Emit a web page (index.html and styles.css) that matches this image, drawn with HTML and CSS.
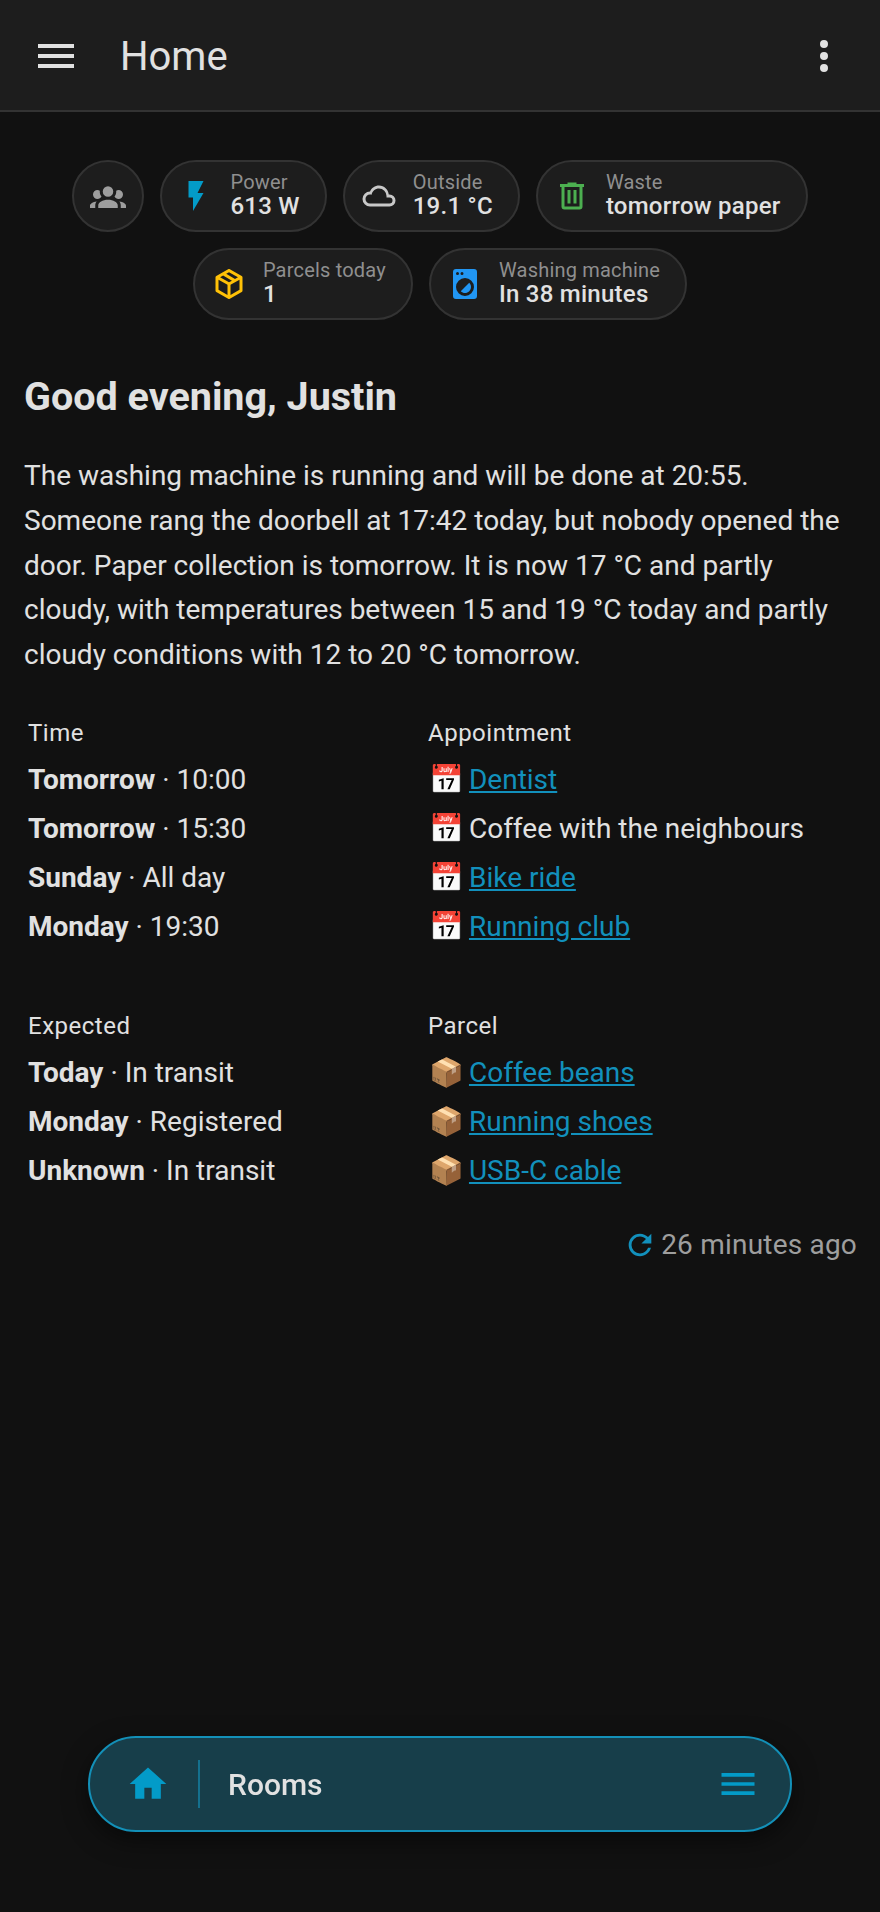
FILE: index.html
```html
<!DOCTYPE html>
<html lang="en">
<head>
    <meta charset="UTF-8">
    <meta name="viewport" content="width=device-width, initial-scale=1.0">
    <title>Home</title>
    <link rel="stylesheet" href="styles.css">
</head>
<body>

    <header class="topbar">
        <svg class="topbar-icon" viewBox="0 0 24 24"><path d="M3,6H21V8H3V6M3,11H21V13H3V11M3,16H21V18H3V16Z"/></svg>
        <div class="topbar-title">Home</div>
        <svg class="topbar-icon" viewBox="0 0 24 24"><path d="M12,16A2,2 0 0,1 14,18A2,2 0 0,1 12,20A2,2 0 0,1 10,18A2,2 0 0,1 12,16M12,10A2,2 0 0,1 14,12A2,2 0 0,1 12,14A2,2 0 0,1 10,12A2,2 0 0,1 12,10M12,4A2,2 0 0,1 14,6A2,2 0 0,1 12,8A2,2 0 0,1 10,6A2,2 0 0,1 12,4Z"/></svg>
    </header>

    <main class="content">
        <div class="chips">
            <div class="chip chip-round">
                <svg class="chip-icon icon-grey" viewBox="0 0 24 24"><path d="M12,5.5A3.5,3.5 0 0,1 15.5,9A3.5,3.5 0 0,1 12,12.5A3.5,3.5 0 0,1 8.5,9A3.5,3.5 0 0,1 12,5.5M5,8C5.56,8 6.08,8.15 6.53,8.42C6.38,9.85 6.8,11.27 7.66,12.38C7.16,13.34 6.16,14 5,14A3,3 0 0,1 2,11A3,3 0 0,1 5,8M19,8A3,3 0 0,1 22,11A3,3 0 0,1 19,14C17.84,14 16.84,13.34 16.34,12.38C17.2,11.27 17.62,9.85 17.47,8.42C17.92,8.15 18.44,8 19,8M5.5,18.25C5.5,16.18 8.41,14.5 12,14.5C15.59,14.5 18.5,16.18 18.5,18.25V20H5.5V18.25M0,20V18.5C0,17.11 1.89,15.94 4.45,15.6C3.86,16.28 3.5,17.22 3.5,18.25V20H0M24,20H20.5V18.25C20.5,17.22 20.14,16.28 19.55,15.6C22.11,15.94 24,17.11 24,18.5V20Z"/></svg>
            </div>
            <div class="chip">
                <svg class="chip-icon icon-blue" viewBox="0 0 24 24"><path d="M7,2V13H10V22L17,10H13L17,2H7Z"/></svg>
                <div class="chip-text"><span class="chip-label">Power</span><span class="chip-value">613 W</span></div>
            </div>
            <div class="chip">
                <svg class="chip-icon icon-light" viewBox="0 0 24 24"><path d="M6,19A5,5 0 0,1 1,14A5,5 0 0,1 6,9C7,6.65 9.3,5 12,5C15.43,5 18.24,7.66 18.5,11.03L19,11A4,4 0 0,1 23,15A4,4 0 0,1 19,19H6M19,13H17V12A5,5 0 0,0 12,7C9.5,7 7.45,8.82 7.06,11.19C6.73,11.07 6.37,11 6,11A3,3 0 0,0 3,14A3,3 0 0,0 6,17H19A2,2 0 0,0 21,15A2,2 0 0,0 19,13Z"/></svg>
                <div class="chip-text"><span class="chip-label">Outside</span><span class="chip-value">19.1 °C</span></div>
            </div>
            <div class="chip">
                <svg class="chip-icon icon-green" viewBox="0 0 24 24"><path d="M9,3V4H4V6H5V19A2,2 0 0,0 7,21H17A2,2 0 0,0 19,19V6H20V4H15V3H9M7,6H17V19H7V6M9,8V17H11V8H9M13,8V17H15V8H13Z"/></svg>
                <div class="chip-text"><span class="chip-label">Waste</span><span class="chip-value">tomorrow paper</span></div>
            </div>
            <div class="chip">
                <svg class="chip-icon icon-amber" viewBox="0 0 24 24"><path d="M21,16.5C21,16.88 20.79,17.21 20.47,17.38L12.57,21.82C12.41,21.94 12.21,22 12,22C11.79,22 11.59,21.94 11.43,21.82L3.53,17.38C3.21,17.21 3,16.88 3,16.5V7.5C3,7.12 3.21,6.79 3.53,6.62L11.43,2.18C11.59,2.06 11.79,2 12,2C12.21,2 12.41,2.06 12.57,2.18L20.47,6.62C20.79,6.79 21,7.12 21,7.5V16.5M12,4.15L10.11,5.22L16,8.61L17.96,7.5L12,4.15M6.04,7.5L12,10.85L13.96,9.75L8.08,6.35L6.04,7.5M5,15.91L11,19.29V12.58L5,9.21V15.91M19,15.91V9.21L13,12.58V19.29L19,15.91Z"/></svg>
                <div class="chip-text"><span class="chip-label">Parcels today</span><span class="chip-value">1</span></div>
            </div>
            <div class="chip">
                <svg class="chip-icon icon-sky" viewBox="0 0 24 24"><path d="M14.83,11.17C16.39,12.73 16.39,15.27 14.83,16.83C13.27,18.39 10.73,18.39 9.17,16.83L14.83,11.17M6,2H18A2,2 0 0,1 20,4V20A2,2 0 0,1 18,22H6A2,2 0 0,1 4,20V4A2,2 0 0,1 6,2M7,4A1,1 0 0,0 6,5A1,1 0 0,0 7,6A1,1 0 0,0 8,5A1,1 0 0,0 7,4M10,4A1,1 0 0,0 9,5A1,1 0 0,0 10,6A1,1 0 0,0 11,5A1,1 0 0,0 10,4M12,8A6,6 0 0,0 6,14A6,6 0 0,0 12,20A6,6 0 0,0 18,14A6,6 0 0,0 12,8Z"/></svg>
                <div class="chip-text"><span class="chip-label">Washing machine</span><span class="chip-value">In 38 minutes</span></div>
            </div>
        </div>

        <h1 class="greeting">Good evening, Justin</h1>
        <p class="summary">The washing machine is running and will be done at 20:55. Someone rang the doorbell at 17:42 today, but nobody opened the door. Paper collection is tomorrow. It is now 17 °C and partly cloudy, with temperatures between 15 and 19 °C today and partly cloudy conditions with 12 to 20 °C tomorrow.</p>

        <table class="agenda">
            <tr><th>Time</th><th>Appointment</th></tr>
            <tr><td><b>Tomorrow</b> · 10:00</td><td><span class="emoji">📅</span> <a href="#">Dentist</a></td></tr>
            <tr><td><b>Tomorrow</b> · 15:30</td><td><span class="emoji">📅</span> Coffee with the neighbours</td></tr>
            <tr><td><b>Sunday</b> · All day</td><td><span class="emoji">📅</span> <a href="#">Bike ride</a></td></tr>
            <tr><td><b>Monday</b> · 19:30</td><td><span class="emoji">📅</span> <a href="#">Running club</a></td></tr>
        </table>

        <table class="agenda agenda-parcels">
            <tr><th>Expected</th><th>Parcel</th></tr>
            <tr><td><b>Today</b> · In transit</td><td><span class="emoji">📦</span> <a href="#">Coffee beans</a></td></tr>
            <tr><td><b>Monday</b> · Registered</td><td><span class="emoji">📦</span> <a href="#">Running shoes</a></td></tr>
            <tr><td><b>Unknown</b> · In transit</td><td><span class="emoji">📦</span> <a href="#">USB-C cable</a></td></tr>
        </table>

        <div class="updated">
            <svg class="updated-icon" viewBox="0 0 24 24"><path d="M17.65,6.35C16.2,4.9 14.21,4 12,4A8,8 0 0,0 4,12A8,8 0 0,0 12,20C15.73,20 18.84,17.45 19.73,14H17.65C16.83,16.33 14.61,18 12,18A6,6 0 0,1 6,12A6,6 0 0,1 12,6C13.66,6 15.14,6.69 16.22,7.78L13,11H20V4L17.65,6.35Z"/></svg>
            <span>26 minutes ago</span>
        </div>
    </main>

    <nav class="bottom-nav">
        <svg class="nav-home" viewBox="0 0 24 24"><path d="M10,20V14H14V20H19V12H22L12,3L2,12H5V20H10Z"/></svg>
        <div class="nav-divider"></div>
        <div class="nav-title">Rooms</div>
        <svg class="nav-menu" viewBox="0 0 24 24"><path d="M3,6H21V8H3V6M3,11H21V13H3V11M3,16H21V18H3V16Z"/></svg>
    </nav>

</body>
</html>
```

FILE: styles.css
```css
html, body { height: 100%; }
body {
    margin: 0;
    overflow: hidden;
    background-color: #111111;
    color: #e1e1e1;
    font-family: Roboto, "Liberation Sans", sans-serif;
}

.topbar {
    display: flex;
    align-items: center;
    box-sizing: border-box;
    height: 112px;
    padding: 2px 32px 0;
    background-color: #1d1d1d;
    border-bottom: 2px solid #333333;
}
.topbar-icon { width: 48px; height: 48px; fill: #e1e1e1; }
.topbar-title {
    flex: 1;
    margin-left: 40px;
    font-size: 40px;
}

.content { padding: 48px 24px 0; }

.chips {
    display: flex;
    flex-wrap: wrap;
    justify-content: center;
    gap: 16px;
}
.chip {
    display: flex;
    align-items: center;
    box-sizing: border-box;
    height: 72px;
    padding: 0 25px 0 16px;
    gap: 16px;
    background-color: #1d1d1d;
    border: 2px solid #333333;
    border-radius: 36px;
}
.chip-round { width: 72px; padding: 0; justify-content: center; }
.chip-icon { width: 36px; height: 36px; flex: none; }
.icon-grey { fill: #9e9e9e; }
.icon-blue { fill: #039bc8; }
.icon-light { fill: #c8c8c8; }
.icon-green { fill: #4caf50; }
.icon-amber { fill: #ffc107; }
.icon-sky { fill: #2196f3; }
.chip-text { display: flex; flex-direction: column; padding-bottom: 4px; }
.chip-label { font-size: 20px; line-height: 24px; color: #8f8f8f; letter-spacing: 0.2px; }
.chip-value { font-size: 24px; line-height: 24px; font-weight: 500; color: #e1e1e1; letter-spacing: 0.25px; }

.greeting {
    margin: 53px 0 0;
    font-size: 39.5px;
    line-height: 48px;
    font-weight: 700;
}
.summary {
    margin: 33px 0 0;
    font-size: 28px;
    line-height: 44.8px;
}

.agenda {
    width: 100%;
    margin-top: 32px;
    border-collapse: separate;
    border-spacing: 4px;
    table-layout: fixed;
    font-size: 28px;
}
.agenda-parcels { margin-top: 50px; }
.agenda th, .agenda td { padding: 0; text-align: left; height: 45px; white-space: nowrap; }
.agenda th { height: 39px; font-size: 24px; font-weight: 400; letter-spacing: 0.5px; }
.agenda th:first-child, .agenda td:first-child { width: 396px; }
.agenda b { font-weight: 700; }
.agenda a { color: #1290bc; }
.emoji { margin: 0 -2px 0 1px; }

.updated {
    display: flex;
    align-items: center;
    justify-content: flex-end;
    gap: 4px;
    margin: 31px -1px 0 0;
    font-size: 28px;
    letter-spacing: 0.2px;
    color: #9e9e9e;
}
.updated-icon { width: 34px; height: 34px; fill: #1290bc; }

/* floats over the page */
.bottom-nav {
    position: fixed;
    left: 88px;
    right: 88px;
    bottom: 80px;
    display: flex;
    align-items: center;
    box-sizing: border-box;
    height: 96px;
    padding: 0 30px 0 36px;
    background-color: #173e4a;
    border: 2px solid #1390b8;
    border-radius: 48px;
    box-shadow: 0 8px 24px rgba(0, 0, 0, 0.5);
}
.nav-home { width: 44px; height: 44px; fill: #039bc8; flex: none; }
.nav-divider { width: 2px; height: 48px; margin: 0 28px 0 28px; background-color: #14708e; }
.nav-title { flex: 1; font-size: 30px; font-weight: 500; }
.nav-menu { width: 44px; height: 44px; fill: #039bc8; flex: none; }
```
